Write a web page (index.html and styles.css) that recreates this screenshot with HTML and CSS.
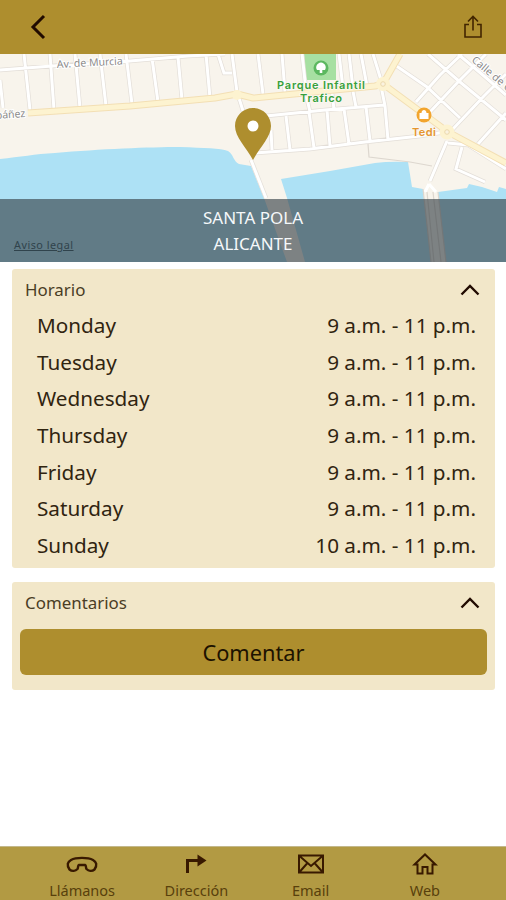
FILE: index.html
```
<!DOCTYPE html>
<html lang="es">
<head>
  <meta charset="UTF-8">
  <meta name="viewport" content="width=device-width, initial-scale=1.0">
  <title>Santa Pola</title>
  <link rel="stylesheet" href="styles.css">
</head>
<body>
  <div class="app">
    <header class="header">
      <svg class="back-icon" viewBox="0 0 18 26"><path d="M15 2 L4 13 L15 24"/></svg>
      <svg class="share-icon" viewBox="0 0 20 24"><path d="M6 9.500H2V22H18V9.500H14M10 15.500V2M5 6.500L10 1.500L15 6.500"/></svg>
    </header>

    <div class="map">
      <svg class="map-canvas" viewBox="0 54 506 208">
        <defs>
          <path id="streets" d="M0 70L52 66L130 61L188 56L225 54M24 54L30 110M50 54L54 110M75 54L80 108M100 54L106 106M126 54L132 104M152 58L158 102M178 57L182 100M206 54L210 98M218 54L224 73H232M232 54L237 92L244 114M0 80L3 108M258 54L263 94M282 54L285 92M302 54L306 90M339 54L343 88M349 54L353 88M361 54L367 86M373 54L381 80M266 116L325 110L384 105M305 90L310 112M331 86L334 109M352 86L356 107M381 86L385 106L388 140M255 153L310 149L365 142L420 136L445 132M286 116L290 150M309 112L314 148M327 110L330 146M344 109L349 144M366 107L370 141M271 130L272 150M395 65L427 87L460 118M428 54L460 82L506 120M458 54L484 76L506 95M416 102L440 75L462 54M430 112L458 82L486 54M452 130L484 96L506 74M478 144L506 113M447 141L430 181M448 143L468 145L506 169M462 147L456 169L485 182"/>
          <path id="avenue" d="M28 113L130 106L215 98L237 94L253 98L375 86L383 84L400 54M383 84L448 132L506 163"/>
        </defs>
        <rect class="land" x="0" y="54" width="506" height="208"/>
        <!-- sea -->
        <path class="water" d="M0 159C20 157 35 154 55 153C100 149 150 147 180 147C205 148 220 148 228 151C234 155 233 161 239 164L251 166L264 198L287 262H0Z"/>
        <path class="water" d="M281 179L330 171L375 163Q390 161 408 162L412 187L423 189L431 262H305L287 198Z"/>
        <path class="water" d="M438 192L467 188L469 184L482 187L497 192L499 187L506 189V262H446Z"/>
        <path class="park" d="M304 54H336V80H306Z"/>
        <use href="#streets" class="street-edge"/>
        <use href="#streets" class="street"/>
        <path class="path-line" d="M368 144L369 157L410 162L432 166"/>
        <path class="street-edge" d="M251 160L266 198"/>
        <path class="street" d="M251 160L266 198"/>
        <!-- pier -->
        <path class="street" d="M429 184L425 192M429 184L436 192"/>
        <path class="path-line" d="M427 192L434 262M433 192L441 262M423 189L431 262M438 192L446 262"/>
        <!-- avenue -->
        <use href="#avenue" class="avenue-edge"/>
        <use href="#avenue" class="avenue"/>
        <circle class="avenue-dot" cx="237" cy="95" r="5"/>
        <circle class="avenue-dot" cx="383" cy="84" r="7"/>
        <circle class="avenue-dot" cx="447" cy="132" r="7.500"/>
        <circle class="round" cx="383" cy="84" r="2.300"/>
        <circle class="round" cx="447" cy="132" r="2.300"/>
        <!-- places -->
        <circle cx="321" cy="68" r="7.500" fill="#5cb860"/>
        <path d="M321 62.500C325 63 327 67 325 70H322.300V73H319.700V70H317C315 67 317 63 321 62.500Z" fill="#fff"/>
        <circle cx="424" cy="115" r="7.500" fill="#f2a52e"/>
        <path d="M419.500 113H428.500V119H419.500ZM421.500 113C421.500 109 426.500 109 426.500 113Z" fill="#fff"/>
        <text class="road-label" x="57" y="68" textLength="66" transform="rotate(-3 57 68)">Av. de Murcia</text>
        <text class="road-label" x="-4" y="119" transform="rotate(-4 -4 119)">báñez</text>
        <text class="road-label" x="471" y="61" transform="rotate(40 471 61)">Calle de C</text>
        <text class="park-label" x="321" y="89" textLength="88">Parque Infantil</text>
        <text class="park-label" x="321" y="102" textLength="42">Trafico</text>
        <text class="shop-label" x="424" y="136" textLength="24">Tedi</text>
      </svg>
      <svg class="pin" viewBox="0 0 36 54"><path d="M18 0C8 0 0 8 0 18C0 29 11 39 18 52C25 39 36 29 36 18C36 8 28 0 18 0Z" fill="#ae8e2e"/><circle cx="18" cy="18" r="5.500" fill="#fff"/></svg>
      <div class="place">
        <span>SANTA POLA</span>
        <span>ALICANTE</span>
      </div>
      <a class="legal">Aviso legal</a>
    </div>

    <main class="content">
      <section class="card hours">
        <div class="card-title">
          <span>Horario</span>
          <svg class="chevron" viewBox="0 0 20 12"><path d="M1.500 10.500L10 2L18.500 10.500"/></svg>
        </div>
        <div class="row"><span>Monday</span><span>9 a.m. - 11 p.m.</span></div>
        <div class="row"><span>Tuesday</span><span>9 a.m. - 11 p.m.</span></div>
        <div class="row"><span>Wednesday</span><span>9 a.m. - 11 p.m.</span></div>
        <div class="row"><span>Thursday</span><span>9 a.m. - 11 p.m.</span></div>
        <div class="row"><span>Friday</span><span>9 a.m. - 11 p.m.</span></div>
        <div class="row"><span>Saturday</span><span>9 a.m. - 11 p.m.</span></div>
        <div class="row"><span>Sunday</span><span>10 a.m. - 11 p.m.</span></div>
      </section>

      <section class="card comments">
        <div class="card-title">
          <span>Comentarios</span>
          <svg class="chevron" viewBox="0 0 20 12"><path d="M1.500 10.500L10 2L18.500 10.500"/></svg>
        </div>
        <button class="comment-btn">Comentar</button>
      </section>
    </main>

    <nav class="tabs">
      <a class="tab">
        <svg viewBox="0 0 32 26"><path class="phone" d="M3.500 17.500C.5 13 1.500 10 5 8C10 5.200 22 5.200 27 8C30.500 10 31.500 13 28.500 17.500C26 19.500 22.500 19 20.500 17C19.500 15.500 20.500 13.500 19 13H13C11.500 13.500 12.500 15.500 11.500 17C9.500 19 6 19.500 3.500 17.500Z"/></svg>
        <span>Llámanos</span>
      </a>
      <a class="tab">
        <svg viewBox="0 0 32 26"><path class="turn" d="M7.500 21V8.500H19"/><path class="solid" d="M17.500 2.500L26.500 8.500L17.500 14.500Z"/></svg>
        <span>Dirección</span>
      </a>
      <a class="tab">
        <svg viewBox="0 0 32 26"><path d="M4 3.500H28V20.500H4ZM4.500 4L16 14L27.500 4M4.500 20L12.500 11M27.500 20L19.500 11"/></svg>
        <span>Email</span>
      </a>
      <a class="tab">
        <svg viewBox="0 0 32 26"><path d="M5.500 12.500L16 2.500L26.500 12.500H23.500V21.500H18.500V15H13.500V21.500H8.500V12.500Z"/></svg>
        <span>Web</span>
      </a>
    </nav>
  </div>
</body>
</html>
```
FILE: styles.css
```
body {
  margin: 0;
  background: #fff;
  color: #302410;
  font-family: "Noto Sans", "Open Sans", sans-serif;
}
.app {
  display: flex;
  flex-direction: column;
  height: 900px;
  overflow: hidden;
}
svg {
  display: block;
  fill: none;
}
.header {
  display: flex;
  justify-content: space-between;
  align-items: center;
  height: 54px;
  padding: 0 23px 0 29px;
  box-sizing: border-box;
  background: #ae8e2e;
}
.back-icon {
  width: 18px;
  height: 26px;
  stroke: #210b00;
  stroke-width: 3;
}
.share-icon {
  width: 20px;
  height: 24px;
  stroke: #422500;
  stroke-width: 1.6;
}

/* map */
.map {
  position: relative;
  height: 208px;
  overflow: hidden;
}
.map-canvas {
  width: 506px;
  height: 208px;
}
.land {
  fill: #f8f4ec;
}
.water {
  fill: #ade1f5;
}
.park {
  fill: #a7e0a2;
}
.street-edge {
  stroke: #e3ded8;
  stroke-width: 4.4;
}
.street {
  stroke: #fff;
  stroke-width: 3;
}
.path-line {
  stroke: #ddd7cf;
  stroke-width: 1.2;
}
.avenue-edge {
  stroke: #f3dfb4;
  stroke-width: 7;
  stroke-linejoin: round;
}
.avenue {
  stroke: #fdf3d0;
  stroke-width: 5;
  stroke-linejoin: round;
}
.avenue-dot {
  fill: #fdf3d0;
}
.round {
  fill: #fbf3df;
  stroke: #ecd9ac;
}
.road-label {
  fill: #8b8a8a;
  font-size: 10.5px;
  stroke: #fff;
  stroke-width: 2px;
  paint-order: stroke;
}
.park-label,
.shop-label {
  font-family: Inter, sans-serif;
  font-size: 11px;
  font-weight: 600;
  text-anchor: middle;
  stroke: #fbf8f2;
  stroke-width: 1.5px;
  paint-order: stroke;
}
.park-label {
  fill: #37a03c;
}
.shop-label {
  fill: #e5952e;
}
.pin {
  position: absolute;
  top: 54px;
  left: 235px;
  width: 36px;
  height: 54px;
}
.place {
  position: absolute;
  left: 0;
  right: 0;
  bottom: 0;
  display: flex;
  flex-direction: column;
  align-items: center;
  height: 63px;
  padding-top: 6px;
  box-sizing: border-box;
  background: rgba(50, 59, 66, 0.62);
  color: #f5f8fa;
  font-size: 17px;
  line-height: 26px;
}
.legal {
  position: absolute;
  left: 14px;
  bottom: 10px;
  color: #30434c;
  font-size: 10.8px;
  line-height: 14px;
  letter-spacing: 0.5px;
  text-decoration: underline;
}

/* cards */
.content {
  flex: 1;
  display: flex;
  flex-direction: column;
  gap: 14px;
  padding: 7px 11px 0 12px;
}
.card {
  background: #f2e7c9;
  border-radius: 3px;
}
.card-title {
  display: flex;
  justify-content: space-between;
  align-items: center;
  height: 38px;
  padding: 4px 15px 0 13px;
  box-sizing: border-box;
  font-size: 16.9px;
  line-height: 20px;
  color: #4a3d25;
}
.chevron {
  width: 20px;
  height: 12px;
  stroke: #210b00;
  stroke-width: 2.4;
}
.hours {
  height: 299px;
}
.row {
  display: flex;
  justify-content: space-between;
  height: 36.7px;
  padding: 0 19px 0 25px;
  font-size: 20.7px;
  line-height: 36.5px;
}
.comments {
  display: flex;
  flex-direction: column;
  height: 108px;
}
.comment-btn {
  height: 46px;
  margin: 9px 8px 0;
  padding: 0;
  border: none;
  border-radius: 6px;
  background: #ae8e2e;
  color: #1c1200;
  font-family: inherit;
  font-size: 21.8px;
  cursor: pointer;
}

/* bottom bar */
.tabs {
  display: flex;
  height: 54px;
  padding: 0 24px 0 25px;
  box-sizing: border-box;
  background: #b29a43;
  border-top: 1px solid #c3b88c;
}
.tab {
  flex: 1;
  display: flex;
  flex-direction: column;
  align-items: center;
  padding-top: 5px;
  color: #58400c;
  font-size: 14.5px;
  line-height: 20px;
}
.tab span {
  margin-top: 2px;
}
.tab svg {
  flex: none;
  width: 32px;
  height: 26px;
  stroke: #381900;
  stroke-width: 2;
}
.tab .phone {
  stroke-width: 2.4;
}
.tab .turn {
  stroke-width: 3;
}
.tab .solid {
  fill: #381900;
  stroke: none;
}
```
